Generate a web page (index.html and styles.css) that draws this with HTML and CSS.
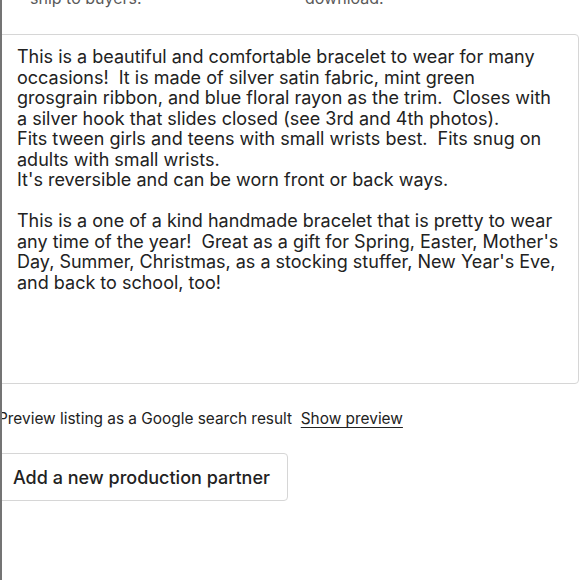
FILE: index.html
```html
<html>
    <head>
        <title>Listing description</title>
        <link rel="stylesheet" href="styles.css">
    </head>
    <body>
        <div class="page">
            <div class="options_row">
                <div class="option_note">ship to buyers.</div>
                <div class="option_note">download.</div>
            </div>
            <textarea class="description" spellcheck="false">This is a beautiful and comfortable bracelet to wear for many occasions!  It is made of silver satin fabric, mint green grosgrain ribbon, and blue floral rayon as the trim.  Closes with a silver hook that slides closed (see 3rd and 4th photos).
Fits tween girls and teens with small wrists best.  Fits snug on adults with small wrists.
It's reversible and can be worn front or back ways.

This is a one of a kind handmade bracelet that is pretty to wear any time of the year!  Great as a gift for Spring, Easter, Mother's Day, Summer, Christmas, as a stocking stuffer, New Year's Eve, and back to school, too!</textarea>
            <div class="preview_row">
                Preview listing as a Google search result&nbsp; <a class="preview_link" href="#">Show preview</a>
            </div>
            <button class="partner_button" type="button">Add a new production partner</button>
        </div>
    </body>
</html>
```
FILE: styles.css
```css
body {

    margin: 0px;
    padding: 0px;
    background: #FFFFFF;
    overflow: hidden;
}

body::before {

    content: "";
    position: fixed;
    left: 0;
    top: 0;
    width: 2px;
    height: 580px;
    background: #747474;
    z-index: 2;
}

div.page {

    display: flow-root;
    margin-left: -2px;
    width: 582px;
    height: 580px;

    font-family: "Inter", "Liberation Sans", sans-serif;
    color: #222222;
}

div.options_row {

    display: grid;
    grid-template-columns: 275px 1fr;

    margin-top: -12px;
    padding-left: 32px;

    font-size: 16px;
    line-height: 20px;
    color: #595959;
}

textarea.description {

    display: block;
    box-sizing: border-box;
    width: 581px;
    height: 350px;

    margin-top: 26px;
    padding: 12px 18px 0 18px;

    border: 1px solid #D6D6D6;
    border-radius: 4px;

    font-family: "Inter", "Liberation Sans", sans-serif;
    font-size: 18px;
    line-height: 20.5px;
    color: #222222;

    resize: none;
    outline: none;
}

div.preview_row {

    margin-top: 24px;

    font-size: 15.4px;
    line-height: 22px;
}

a.preview_link {

    color: #222222;
    text-decoration: underline;
    text-underline-offset: 3px;
}

button.partner_button {

    display: block;
    box-sizing: border-box;
    height: 48px;

    margin-top: 23px;
    padding: 0 17px 0 14px;

    border: 1px solid #D6D6D6;
    border-radius: 4px;
    background: #FFFFFF;

    font-family: "Inter", "Liberation Sans", sans-serif;
    font-size: 18px;
    font-weight: 500;
    color: #222222;
}
```
